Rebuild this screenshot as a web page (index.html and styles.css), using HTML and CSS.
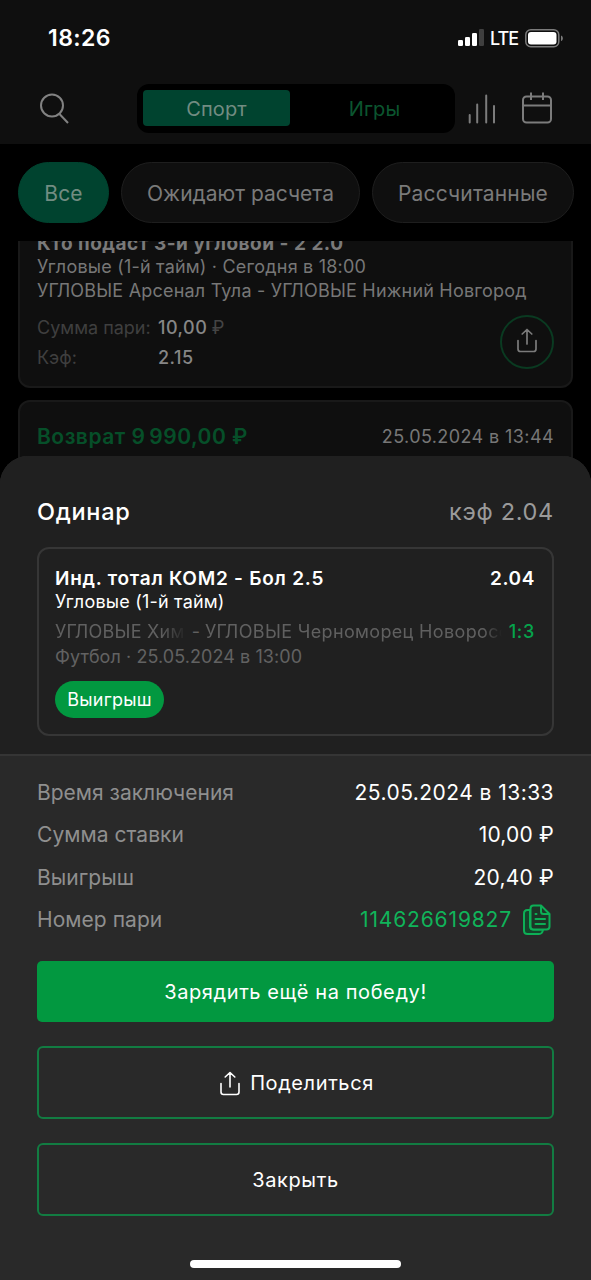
FILE: index.html
```html
<!DOCTYPE html>
<html lang="ru">
<head>
<meta charset="utf-8">
<title>Пари</title>
<link rel="stylesheet" href="styles.css">
</head>
<body>
<div class="phone">
  <header class="top">
    <div class="status">
      <span class="clock">18:26</span>
      <div class="status-right">
        <svg class="signal" width="26" height="18" viewBox="0 0 26 18"><rect x="0" y="11" width="5" height="6" rx="1.3" fill="#fff"/><rect x="7" y="8" width="5" height="9" rx="1.3" fill="#fff"/><rect x="14" y="4" width="5" height="13" rx="1.3" fill="#fff"/><rect x="21" y="0" width="5" height="17" rx="1.3" fill="#3f3f3f"/></svg>
        <span class="lte">LTE</span>
        <svg class="battery" width="39" height="19" viewBox="0 0 39 19"><rect x=".8" y=".8" width="33" height="17" rx="5" fill="none" stroke="#7b7b7b" stroke-width="1.5"/><rect x="3" y="3" width="28.5" height="12.6" rx="3" fill="#fff"/><path d="M36 6.5c2.5.8 2.500 4.800 0 5.600z" fill="#7b7b7b"/></svg>
      </div>
    </div>
    <nav class="nav">
      <svg class="search" width="30" height="32" viewBox="0 0 30 32" fill="none" stroke="#828282" stroke-width="2"><circle cx="12" cy="12.500" r="11"/><path d="M19.500 21L28 30"/></svg>
      <div class="switch"><span class="tab active">Спорт</span><span class="tab games">Игры</span></div>
      <svg class="bars" width="28" height="30" viewBox="0 0 28 30" stroke="#7c7c7c" stroke-width="2" stroke-linecap="round"><path d="M1.700 21v7.500M9.200 10.500v18M18.200 1.500v27M26 12v16.500"/></svg>
      <svg class="calendar" width="30" height="32" viewBox="0 0 30 32" fill="none" stroke="#7c7c7c" stroke-width="2"><rect x="1" y="4.500" width="28" height="26" rx="3.500"/><path d="M1 13.500h28M9 .5V8M21 .5V8"/></svg>
    </nav>
  </header>
  <div class="filters">
    <span class="chip chip-on">Все</span><span class="chip chip-wait">Ожидают расчета</span><span class="chip chip-done">Рассчитанные</span>
  </div>
  <main class="list">
    <section class="bet first">
      <div class="bet-title">Кто подаст 3-й угловой - 2 2.0</div>
      <div class="bet-sub">Угловые (1-й тайм) · Сегодня в 18:00</div>
      <div class="bet-teams">УГЛОВЫЕ Арсенал Тула - УГЛОВЫЕ Нижний Новгород</div>
      <div class="bet-foot">
        <div class="bet-nums">
          <span class="k">Сумма пари:</span><span class="v">10,00 <span class="rub">₽</span></span>
          <span class="k">Кэф:</span><span class="v">2.15</span>
        </div>
        <div class="share-round"><svg width="20" height="25" viewBox="0 0 20 25" fill="none" stroke="#7b7b7b" stroke-width="1.700" stroke-linecap="round" stroke-linejoin="round"><path d="M1 12.500V21q0 2.500 2.500 2.500h13q2.500 0 2.500-2.500v-8.500M10 16V1.500M5.200 6L10 1.500 14.800 6"/></svg></div>
      </div>
    </section>
    <section class="bet second">
      <span class="refund">Возврат 9&#8201;990,00 ₽</span><span class="refund-date">25.05.2024 в 13:44</span>
    </section>
  </main>
  <div class="sheet">
    <div class="sheet-top">
      <div class="sheet-head"><span class="kind">Одинар</span><span class="coef">кэф 2.04</span></div>
      <div class="ticket">
        <div class="line outcome"><span class="outcome-name">Инд. тотал КОМ2 - Бол 2.5</span><span class="outcome-coef">2.04</span></div>
        <div class="market">Угловые (1-й тайм)</div>
        <div class="line match"><span class="team home">УГЛОВЫЕ Хим</span><span class="dash">-</span><span class="team away">УГЛОВЫЕ Черноморец Новоросс</span><span class="score">1:3</span></div>
        <div class="when">Футбол · 25.05.2024 в 13:00</div>
        <span class="badge">Выигрыш</span>
      </div>
    </div>
    <div class="sheet-body">
      <div class="row"><span class="label time">Время заключения</span><span class="val date">25.05.2024 в 13:33</span></div>
      <div class="row"><span class="label">Сумма ставки</span><span class="val">10,00 ₽</span></div>
      <div class="row"><span class="label">Выигрыш</span><span class="val">20,40 ₽</span></div>
      <div class="row"><span class="label">Номер пари</span><span class="val number"><span>114626619827</span><svg width="28" height="32" viewBox="0 0 28 32" fill="none" stroke="#0daf56" stroke-width="2" stroke-linecap="round" stroke-linejoin="round"><path fill="#14452b" d="M7 6H4.500Q1 6 1 9.500v17Q1 30 4.500 30H16q3.500 0 4-4.500H10.500q-3 0-3.500-3z"/><path fill="#1d3527" d="M10.500 1.500H18l8.500 8.500v12.500q0 3-3 3h-13q-3 0-3-3V4.500q0-3 3-3z"/><path d="M18 2v5.500q0 2.500 2.500 2.500h5.500M12.500 15h9.500M12.500 20h9.500M12.500 10h1"/></svg></span></div>
      <div class="btn btn-main">Зарядить ещё на победу!</div>
      <div class="btn btn-line share"><svg width="22" height="25" viewBox="0 0 22 25" fill="none" stroke="#fff" stroke-width="1.600" stroke-linecap="round" stroke-linejoin="round"><path d="M2 12.500V21q0 2.500 2.500 2.500h13q2.500 0 2.500-2.500v-8.500M11 16V1.500M6.200 6L11 1.500 15.800 6"/></svg><span>Поделиться</span></div>
      <div class="btn btn-line close">Закрыть</div>
      <div class="home-bar"></div>
    </div>
  </div>
</div>
</body>
</html>
```
FILE: styles.css
```css
* { box-sizing: border-box; }
body { margin: 0; background: #000; font-family: Inter, "Noto Sans", sans-serif; }
.phone { position: relative; width: 591px; height: 1280px; overflow: hidden; background: #000; display: flex; flex-direction: column; white-space: nowrap; }
svg { display: block; flex: none; }

.top { height: 144px; background: #0f0f0f; flex: none; }
.status { display: flex; justify-content: space-between; height: 76px; padding: 0 28px 0 48px; align-items: center; }
.clock { color: #fff; font-size: 23px; font-weight: 600; letter-spacing: .4px; }
.status-right { display: flex; align-items: center; color: #fff; }
.lte { font-size: 18px; font-weight: 500; letter-spacing: -1px; margin: 1px 7px 0 7px; }
.signal { margin-right: -1px; }
.battery { margin-right: -1px; }
.nav { display: flex; align-items: center; height: 64px; padding: 0 39px 0 40px; }
.search { margin-top: 1px; }
.switch { display: flex; width: 318px; height: 49px; margin-left: 67px; padding: 6px; background: #000; border-radius: 12px; }
.tab { width: 147px; height: 36px; line-height: 38px; text-align: center; font-size: 20px; border-radius: 4px; letter-spacing: .1px; }
.active { background: #00432f; color: #728c82; }
.games { color: #0b552f; margin-left: 11px; }
.bars { margin-left: 13px; margin-top: 1px; }
.calendar { margin-left: 26px; }

.filters { display: flex; gap: 12px; padding: 18px 18px 0; height: 97px; flex: none; }
.chip { height: 61px; line-height: 61px; border: 1px solid #1e1e1e; border-radius: 31px; background: #0f0f0f; color: #7a7a7a; font-size: 21px; text-align: center; letter-spacing: .15px; flex: none; }
.chip-on { width: 91px; background: #00432f; border-color: #00432f; color: #728c82; }
.chip-wait { width: 239px; letter-spacing: 0; }
.chip-done { width: 202px; }

.list { flex: 1; overflow: hidden; padding: 0 18px; }
.bet { border: 2px solid #191919; background: #0f0f0f; border-radius: 12px; width: 555px; padding: 0 17px; }
.first { margin-top: -37px; height: 184px; padding-top: 26px; }
.bet-title { height: 23px; line-height: 24px; font-size: 19px; font-weight: 700; color: #7a7a7a; letter-spacing: .5px; }
.bet-sub, .bet-teams { height: 24px; line-height: 24px; font-size: 18px; color: #777; letter-spacing: .2px; }
.bet-foot { display: flex; justify-content: space-between; padding-top: 12px; }
.bet-nums { display: grid; grid-template-columns: 121px auto; height: 60px; grid-auto-rows: 30px; line-height: 30px; font-size: 18px; margin-top: -2px; }
.k { color: #3f3f3f; }
.v { color: #868686; font-weight: 500; letter-spacing: .5px; }
.rub { color: #444; font-weight: 400; margin-left: -1px; }
.share-round { width: 54px; height: 54px; border: 2px solid #0a3a21; border-radius: 50%; display: flex; align-items: center; justify-content: center; padding-bottom: 3px; }
.second { height: 90px; margin-top: 12px; padding-top: 22px; display: flex; justify-content: space-between; line-height: 26px; }
.refund { color: #064f29; font-size: 21px; font-weight: 600; letter-spacing: .5px; }
.refund-date { color: #777; font-size: 18px; letter-spacing: .4px; }

/* Bottom sheet laid over the bet list */
.sheet { position: absolute; left: 0; right: 0; top: 456px; bottom: 0; background: #292929; border-radius: 28px 28px 0 0; overflow: hidden; }
.sheet-top { height: 300px; background: #202020; border-bottom: 2px solid #353535; padding: 40px 37px 0; }
.sheet-head { display: flex; justify-content: space-between; line-height: 32px; font-size: 23.500px; }
.kind { color: #fff; font-weight: 500; letter-spacing: .7px; }
.coef { color: #9a9a9a; letter-spacing: .7px; }
.ticket { margin-top: 19px; height: 189px; border: 2px solid #363636; border-radius: 12px; padding: 18px 17px 0 16px; font-size: 18px; }
.line { display: flex; }
.outcome { height: 24px; line-height: 24px; color: #fff; font-weight: 600; font-size: 19px; justify-content: space-between; }
.outcome-name { letter-spacing: .75px; }
.outcome-coef { letter-spacing: .6px; }
.market { color: #fff; height: 24px; line-height: 22px; letter-spacing: .2px; }
.match { height: 34px; line-height: 34px; color: #606060; }
.team { letter-spacing: .25px; overflow: hidden; -webkit-mask-image: linear-gradient(to left, transparent 0, #000 26px); mask-image: linear-gradient(to left, transparent 0, #000 26px); }
.home { width: 132px; }
.dash { width: 18px; text-align: center; }
.away { width: 297px; letter-spacing: .35px; -webkit-mask-image: linear-gradient(to left, transparent 0, #000 18px); mask-image: linear-gradient(to left, transparent 0, #000 18px); }
.score { color: #06a34c; font-weight: 500; margin-left: 7px; letter-spacing: .7px; }
.when { color: #626262; height: 16px; line-height: 16px; letter-spacing: .07px; }
.badge { display: block; width: 109px; height: 37px; line-height: 37px; margin-top: 16px; background: #029840; border-radius: 19px; color: #fff; text-align: center; letter-spacing: .2px; }

.sheet-body { padding: 16px 37px 0; }
.row { display: flex; justify-content: space-between; height: 42.400px; line-height: 42.400px; font-size: 21px; }
.label { color: #8f8f8f; letter-spacing: .05px; }
.time { letter-spacing: 0; }
.val { color: #fff; letter-spacing: .2px; }
.date { letter-spacing: .45px; }
.number { color: #10b45a; display: flex; align-items: center; margin-right: 3px; letter-spacing: .85px; }
.number svg { margin-left: 11px; }
.btn { height: 73px; border-radius: 6px; color: #fff; font-size: 20px; display: flex; align-items: center; justify-content: center; letter-spacing: .6px; }
.btn-main { height: 61px; background: #029840; margin-top: 19.500px; border-radius: 5px; }
.btn-line { border: 2px solid #127c42; margin-top: 24px; }
.share { padding-left: 2px; }
.share svg { margin: 1px 9px 0 0; }
.home-bar { width: 211px; height: 8px; border-radius: 4px; background: #fff; margin: 44px auto 0; }
```
